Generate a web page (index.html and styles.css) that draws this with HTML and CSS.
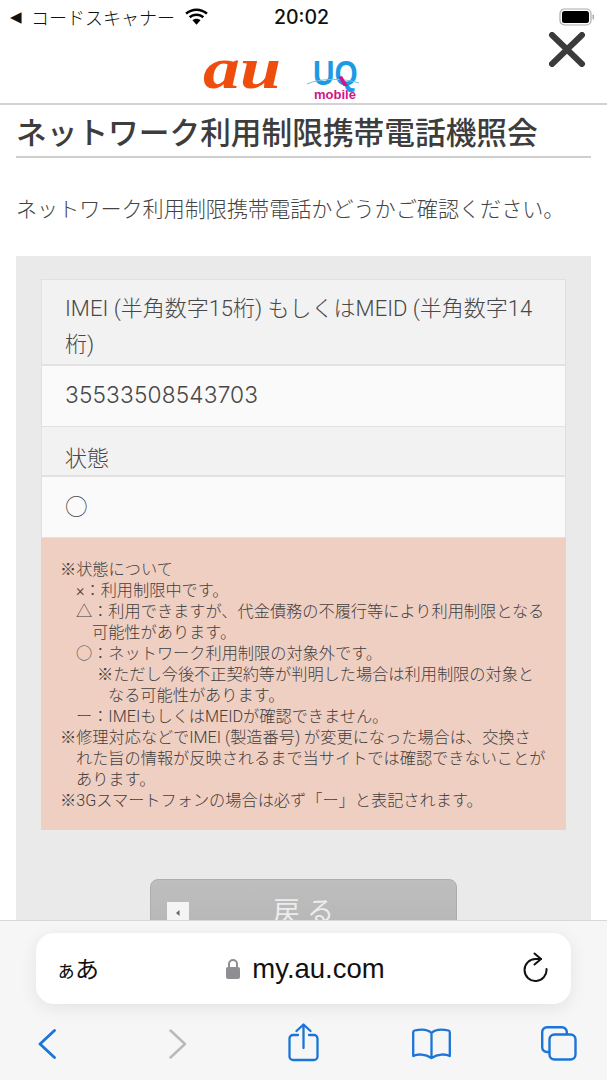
FILE: index.html
```
<!DOCTYPE html>
<html lang="ja">
<head>
<meta charset="utf-8">
<title>ネットワーク利用制限携帯電話機照会</title>
<link rel="stylesheet" href="styles.css">
</head>
<body>
<div class="screen">
  <div class="status">
    <span class="status-back">◀</span>
    <span class="status-app">コードスキャナー</span>
    <svg class="wifi" width="25" height="18" viewBox="0 0 25 18"><path d="M12.5 3c3.6 0 6.9 1.3 9.6 3.6l1.7-1.9C20.700 2 16.800.4 12.500.4S4.300 2 1.200 4.700l1.700 1.900C5.600 4.300 8.900 3 12.500 3z" fill="#000"/><path d="M12.500 8.100c2.200 0 4.300.8 5.900 2.200l1.800-2c-2.100-1.800-4.800-2.900-7.700-2.900s-5.600 1.100-7.700 2.900l1.800 2c1.600-1.400 3.700-2.200 5.900-2.200z" fill="#000"/><path d="M12.500 10.800c-1.500 0-2.900.5-4 1.500l4 4.500 4-4.500c-1.100-1-2.500-1.500-4-1.500z" fill="#000"/></svg>
    <span class="status-time">20:02</span>
    <svg class="battery" width="37" height="18" viewBox="0 0 37 18"><rect x="1" y="1" width="31" height="16" rx="4.500" fill="none" stroke="#aaa" stroke-width="1.200"/><rect x="3" y="3" width="27" height="12" rx="2.500" fill="#000"/><rect x="33.500" y="6.500" width="1.500" height="5" rx=".7" fill="#aaa"/></svg>
  </div>
  <header class="site-header">
    <div class="logo-au">au</div>
    <div class="logo-uq">
      <div class="uq-mark"><span class="uq-text">UQ</span><svg class="uq-swoosh" width="54" height="14" viewBox="0 0 54 14"><path d="M1 9C14 3 38 3 53 8" fill="none" stroke="#7cc3d8" stroke-width="1"/><path d="M36 1l6 10h-4.500l-5-9z" fill="#d1148c"/></svg></div>
      <div class="uq-sub">mobile</div>
    </div>
    <svg class="close" width="38" height="35" viewBox="0 0 38 35"><path d="M4 3l30 29M34 3L4 32" stroke="#3b3b3b" stroke-width="6" stroke-linecap="round"/></svg>
  </header>
  <main class="content">
    <h1 class="title">ネットワーク利用制限携帯電話機照会</h1>
    <p class="lead">ネットワーク利用制限携帯電話かどうかご確認ください。</p>
    <section class="panel">
      <div class="table">
        <div class="cell-head cell-head-imei">IMEI (半角数字15桁) もしくはMEID (半角数字14桁)</div>
        <div class="cell-value digits">35533508543703</div>
        <div class="cell-head cell-head-state">状態</div>
        <div class="cell-value cell-state">○</div>
        <div class="note">
          <div>※状態について</div>
          <div class="n1">×：利用制限中です。</div>
          <div class="n1">△：利用できますが、代金債務の不履行等により利用制限となる<br><span class="n1-wrap">可能性があります。</span></div>
          <div class="n1">○：ネットワーク利用制限の対象外です。</div>
          <div class="n2">※ただし今後不正契約等が判明した場合は利用制限の対象と<br><span class="n2-wrap">なる可能性があります。</span></div>
          <div class="n1">ー：IMEIもしくはMEIDが確認できません。</div>
          <div>※修理対応などでIMEI (製造番号) が変更になった場合は、交換さ<br><span class="n0-wrap">れた旨の情報が反映されるまで当サイトでは確認できないことが</span><br><span class="n0-wrap">あります。</span></div>
          <div>※3Gスマートフォンの場合は必ず「ー」と表記されます。</div>
        </div>
      </div>
      <div class="back-btn">
        <span class="back-icon"><svg width="22" height="22" viewBox="0 0 22 22"><path d="M12.500 8v6l-3.500-3z" fill="#666"/></svg></span>
        <span class="back-label">戻る</span>
      </div>
    </section>
  </main>
  <div class="safari">
    <div class="address">
      <span class="aa"><span class="aa-small">ぁ</span>あ</span>
      <div class="url">
        <svg width="14" height="20" viewBox="0 0 14 20"><rect x="0" y="8" width="14" height="12" rx="2" fill="#8e8e93"/><path d="M3 9V5a4 4 0 0 1 8 0v4" fill="none" stroke="#8e8e93" stroke-width="2"/></svg>
        <span>my.au.com</span>
      </div>
      <svg class="reload" width="26" height="30" viewBox="0 0 26 30"><path d="M18 7H12.500A11 11 0 1 0 23.500 17" fill="none" stroke="#111" stroke-width="2" stroke-linecap="round"/><path d="M11.500 1.500L18 7l-6.500 5.500" fill="none" stroke="#111" stroke-width="2" stroke-linecap="round" stroke-linejoin="round"/></svg>
    </div>
    <nav class="toolbar">
      <svg class="tb-back" width="18" height="30" viewBox="0 0 18 30"><path d="M16.500 1.500L2 15l14.500 13.500" fill="none" stroke="#1b74d8" stroke-width="2.800" stroke-linecap="round" stroke-linejoin="round"/></svg>
      <svg class="tb-forward" width="18" height="30" viewBox="0 0 18 30"><path d="M1.500 1.500L16 15 1.500 28.500" fill="none" stroke="#b9b9bd" stroke-width="2.400" stroke-linecap="round" stroke-linejoin="round"/></svg>
      <svg class="tb-share" width="31" height="39" viewBox="0 0 31 39"><path d="M10 12H5a3.500 3.500 0 0 0-3.500 3.500v18A3.500 3.500 0 0 0 5 37h21a3.500 3.500 0 0 0 3.500-3.500v-18A3.500 3.500 0 0 0 26 12h-5M15.500 25V2M8.500 8l7-6.500 7 6.500" fill="none" stroke="#1b74d8" stroke-width="2.300" stroke-linecap="round" stroke-linejoin="round"/></svg>
      <svg class="tb-book" width="39" height="32" viewBox="0 0 39 32"><path d="M19.500 5C16 1.500 9 1 2.500 2.500c-1 .3-1.300 1-1.300 2v23.500c4-2 12-2.500 18.300 2 6.300-4.500 14.300-4 18.300-2V4.500c0-1-.3-1.700-1.300-2C30 1 23 1.500 19.500 5zm0 0v25" fill="none" stroke="#1b74d8" stroke-width="2.300" stroke-linejoin="round"/></svg>
      <svg class="tb-tabs" width="36" height="35" viewBox="0 0 36 35"><rect x="8.500" y="8.500" width="26" height="25" rx="5" fill="none" stroke="#1b74d8" stroke-width="2.400"/><path d="M8.500 26H6a4.800 4.800 0 0 1-4.800-4.800V6A4.800 4.800 0 0 1 6 1.200h15A4.800 4.800 0 0 1 25.800 6v2.500" fill="none" stroke="#1b74d8" stroke-width="2.400"/></svg>
    </nav>
  </div>
</div>
</body>
</html>
```
FILE: styles.css
```
* { box-sizing: border-box; }
html, body { margin: 0; padding: 0; background: #fff; }
body { font-family: "Noto Sans CJK JP", "Noto Sans", sans-serif; color: #454545; }
.screen { position: relative; width: 607px; height: 1080px; overflow: hidden; background: #fff; }

.status { display: flex; align-items: center; height: 32px; padding: 2px 11px 0 10px; color: #111; }
.status-back { font-size: 15px; width: 21px; font-family: "DejaVu Sans", sans-serif; }
.status-app { font-size: 18px; font-weight: 300; width: 154px; }
.wifi { flex: none; margin-left: -1px; }
.status-time { font-family: Inter, sans-serif; font-size: 19.500px; font-weight: 500; margin-left: 65px; color: #111; }
.battery { margin-left: auto; flex: none; }

.site-header { position: relative; display: flex; align-items: flex-start; height: 73px; border-bottom: 2px solid #d2d2d2; padding: 22px 0 0 203px; }
.logo-au { font-family: "Liberation Serif", serif; font-style: italic; font-weight: 700; font-size: 60px; line-height: 44px; color: #ee4d0d; width: 75px; margin-top: -8px; transform: scaleX(1.23); transform-origin: left; }
.logo-uq { margin-left: 35px; width: 44px; margin-top: 5px; text-align: center; }
.uq-mark { position: relative; height: 27px; font-family: "Liberation Sans", sans-serif; font-weight: 700; font-size: 35px; line-height: 27px; color: #1c9ae4; }
.uq-text { display: block; width: 52px; text-align: left; transform: scaleX(.85); transform-origin: left; }
.uq-swoosh { position: absolute; left: -7px; top: 16px; }
.uq-sub { margin-top: 3px; font-family: "Liberation Sans", sans-serif; font-weight: 700; font-size: 13px; line-height: 12px; color: #d1148c; white-space: nowrap; }
.close { position: absolute; top: 0; right: 21px; }

.content { padding: 0 16px; }
.title { margin: 0; height: 53px; font-size: 30.700px; font-weight: 500; line-height: 51px; border-bottom: 2px solid #cfcfcf; color: #3d3d3d; white-space: nowrap; }
.lead { margin: 0; height: 98px; padding-top: 34px; font-size: 21.100px; line-height: 32px; font-weight: 300; color: #444; white-space: nowrap; }

.panel { background: #eaeaea; padding: 23px 25px 0; height: 700px; }
.table { border: 1px solid #e0e0e0; border-bottom: 0; font-family: Roboto, "Noto Sans CJK JP", sans-serif; }
.cell-head { background: #f2f2f2; padding: 0 23px; font-size: 22px; font-weight: 300; line-height: 36px; border-bottom: 2px solid #e2e2e2; color: #484848; }
.cell-head-imei { height: 86px; padding-top: 11px; }
.cell-head-state { height: 50px; padding-top: 14px; }
.cell-value { background: #fafafa; padding: 0 23px; height: 61px; font-size: 22.700px; font-weight: 300; line-height: 59px; border-bottom: 1px solid #e2e2e2; color: #484848; }
.cell-state { line-height: 61px; }
.digits { font-family: Inter, sans-serif; letter-spacing: .15px; line-height: 58px; }
.note { background: #f0cfc3; margin: 0 -1px; padding: 21px 20px 20px 19px; font-size: 16.200px; line-height: 21px; font-weight: 300; color: #404040; height: 292px; white-space: nowrap; }
.n1 { padding-left: 16px; }
.n1-wrap { padding-left: 16px; }
.n2 { padding-left: 37px; }
.n2-wrap { padding-left: 11px; }
.n0-wrap { padding-left: 16px; }

.back-btn { position: relative; margin: 49px auto 0; width: 307px; height: 70px; border-radius: 8px; background: linear-gradient(#bebebe, #b4b4b4); border: 1px solid #adadad; text-align: center; font-family: "Noto Sans CJK JP", sans-serif; }
.back-icon { position: absolute; left: 16px; top: 22px; width: 22px; height: 22px; background: #f4f4f4; }
.back-icon svg { display: block; }
.back-label { display: block; padding-left: 7px; color: #ececec; font-size: 27px; font-weight: 400; letter-spacing: 7px; line-height: 60px; }

.safari { position: absolute; left: 0; right: 0; top: 920px; height: 160px; background: #f6f6f6; border-top: 1px solid #d8d8d8; padding: 12px 36px 0; }
.address { position: relative; display: flex; align-items: center; justify-content: center; height: 71px; border-radius: 18px; background: #fff; box-shadow: 0 4px 18px rgba(0,0,0,.08); }
.aa { position: absolute; left: 20px; top: 17px; color: #111; font-size: 24px; line-height: 36px; letter-spacing: -1px; }
.aa-small { font-size: 20px; }
.url { display: flex; align-items: center; gap: 12px; color: #111; font-family: "Liberation Sans", sans-serif; font-size: 27.500px; margin-left: 4px; }
.reload { position: absolute; right: 22px; top: 19px; }
.toolbar { position: relative; height: 76px; margin: 0 -36px; }
.toolbar svg { position: absolute; }
.tb-back { left: 38px; top: 25px; }
.tb-forward { left: 169px; top: 25px; }
.tb-share { left: 288px; top: 19px; }
.tb-book { left: 412px; top: 24px; }
.tb-tabs { left: 541px; top: 22px; }
```
